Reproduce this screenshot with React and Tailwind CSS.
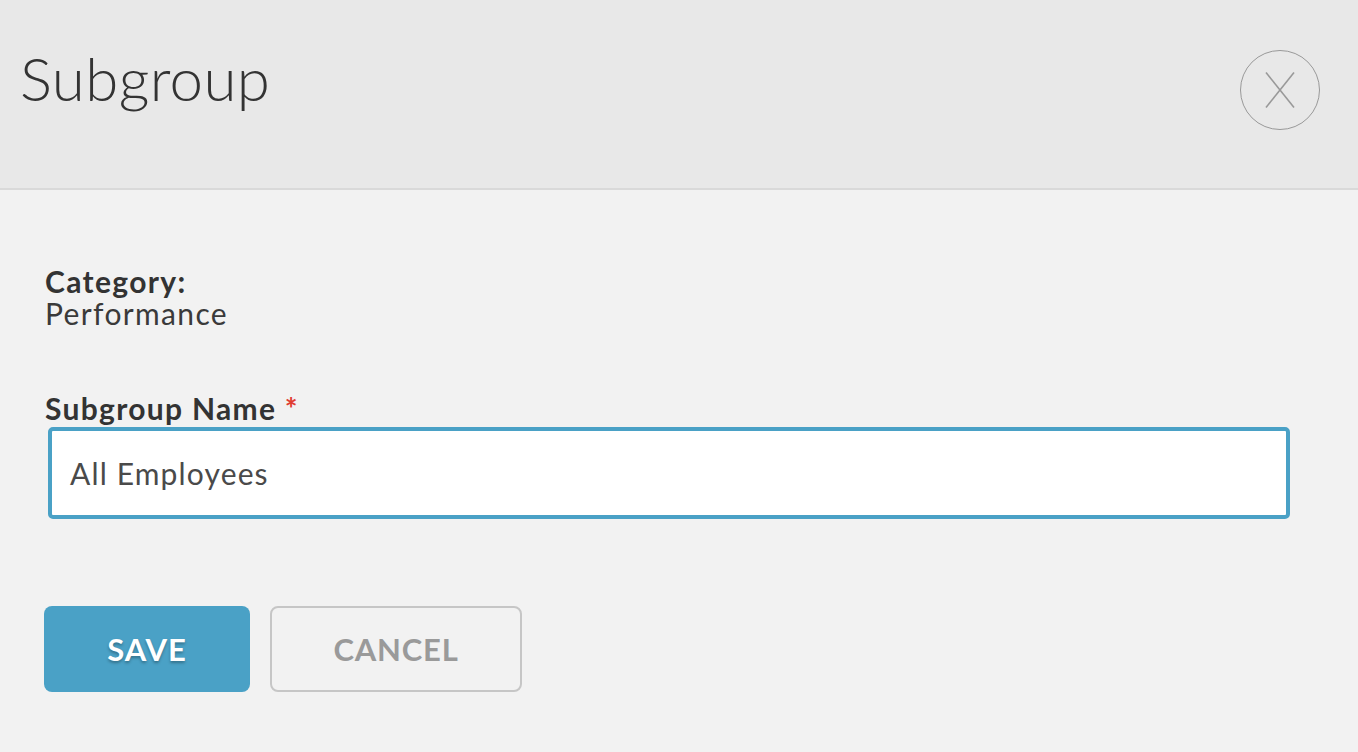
export default function App() {
  return (
    <div className="min-h-screen bg-[#f2f2f2] font-['Lato',sans-serif] text-[#333]">
      {/* Header */}
      <div className="h-[190px] bg-[#e8e8e8] border-b-2 border-[#d9d9d9] flex items-start justify-between pl-[20px] pr-[38px]">
        <h1 className="mt-[42px] text-[60px] leading-[72px] font-light tracking-[0.4px] text-[#333]">Subgroup</h1>
        <button className="mt-[50px] w-[80px] h-[80px] rounded-full border-[1.5px] border-[#999] flex items-center justify-center">
          <svg width="30" height="36" viewBox="0 0 30 36" fill="none" stroke="#999" strokeWidth="1.6">
            <line x1="1" y1="0.5" x2="29" y2="35.5" />
            <line x1="29" y1="0.5" x2="1" y2="35.5" />
          </svg>
        </button>
      </div>

      {/* Body */}
      <div className="pl-[45px] pr-[68px] pt-[75px]">
        <div className="text-[30px] leading-[32px] tracking-[1.35px]">
          <div className="font-bold">Category:</div>
          <div className="text-[#3a3a3a]">Performance</div>
        </div>

        <div className="mt-[63px]">
          <label className="block text-[30px] leading-[32px] font-bold tracking-[1.3px]">
            Subgroup Name <span className="text-[#e03c31] font-bold">*</span>
          </label>
          <div className="ml-[3px] mt-[3px] h-[92px] bg-white border-4 border-[#4aa1c6] rounded-[5px] flex items-center px-[18px] text-[30px] tracking-[1.15px] text-[#4a4a4a]">
            All Employees
          </div>
        </div>

        <div className="mt-[87px] -ml-[1px] flex gap-[20px]">
          <button className="w-[206px] h-[86px] rounded-[8px] bg-[#4aa1c6] text-white text-[31px] font-bold tracking-[1px] [text-shadow:0_2px_3px_rgba(0,0,0,0.3)]">
            SAVE
          </button>
          <button className="w-[252px] h-[86px] rounded-[8px] border-2 border-[#c6c6c6] text-[#9a9a9a] text-[31px] font-bold tracking-[0.8px]">
            CANCEL
          </button>
        </div>
      </div>
    </div>
  );
}
